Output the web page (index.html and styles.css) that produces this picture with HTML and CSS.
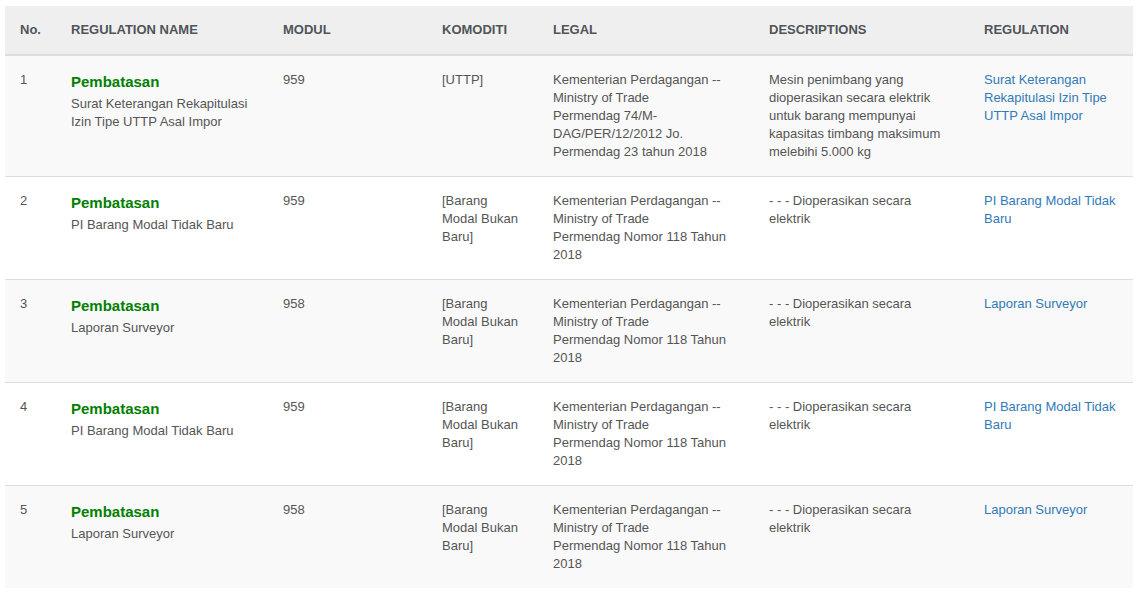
FILE: index.html
```html
<!DOCTYPE html>
<html>
<head>
<meta charset="utf-8">
<link rel="stylesheet" href="styles.css">
</head>
<body>
<div class="wrap">
<table class="reg-table">
<colgroup>
<col class="c-no"><col class="c-name"><col class="c-modul"><col class="c-kom"><col class="c-legal"><col class="c-desc"><col class="c-reg">
</colgroup>
<thead>
<tr><th>No.</th><th>REGULATION NAME</th><th>MODUL</th><th>KOMODITI</th><th>LEGAL</th><th>DESCRIPTIONS</th><th>REGULATION</th></tr>
</thead>
<tbody>
<tr>
<td>1</td>
<td><div class="type">Pembatasan</div><div>Surat Keterangan Rekapitulasi Izin Tipe UTTP Asal Impor</div></td>
<td>959</td>
<td>[UTTP]</td>
<td>Kementerian Perdagangan -- Ministry of Trade<br>Permendag 74/M-DAG/PER/12/2012 Jo. Permendag 23 tahun 2018</td>
<td>Mesin penimbang yang dioperasikan secara elektrik untuk barang mempunyai kapasitas timbang maksimum melebihi 5.000 kg</td>
<td><a href="#">Surat Keterangan Rekapitulasi Izin Tipe UTTP Asal Impor</a></td>
</tr>
<tr>
<td>2</td>
<td><div class="type">Pembatasan</div><div>PI Barang Modal Tidak Baru</div></td>
<td>959</td>
<td>[Barang Modal Bukan Baru]</td>
<td>Kementerian Perdagangan -- Ministry of Trade<br>Permendag Nomor 118 Tahun 2018</td>
<td>- - - Dioperasikan secara elektrik</td>
<td><a href="#">PI Barang Modal Tidak Baru</a></td>
</tr>
<tr>
<td>3</td>
<td><div class="type">Pembatasan</div><div>Laporan Surveyor</div></td>
<td>958</td>
<td>[Barang Modal Bukan Baru]</td>
<td>Kementerian Perdagangan -- Ministry of Trade<br>Permendag Nomor 118 Tahun 2018</td>
<td>- - - Dioperasikan secara elektrik</td>
<td><a href="#">Laporan Surveyor</a></td>
</tr>
<tr>
<td>4</td>
<td><div class="type">Pembatasan</div><div>PI Barang Modal Tidak Baru</div></td>
<td>959</td>
<td>[Barang Modal Bukan Baru]</td>
<td>Kementerian Perdagangan -- Ministry of Trade<br>Permendag Nomor 118 Tahun 2018</td>
<td>- - - Dioperasikan secara elektrik</td>
<td><a href="#">PI Barang Modal Tidak Baru</a></td>
</tr>
<tr>
<td>5</td>
<td><div class="type">Pembatasan</div><div>Laporan Surveyor</div></td>
<td>958</td>
<td>[Barang Modal Bukan Baru]</td>
<td>Kementerian Perdagangan -- Ministry of Trade<br>Permendag Nomor 118 Tahun 2018</td>
<td>- - - Dioperasikan secara elektrik</td>
<td><a href="#">Laporan Surveyor</a></td>
</tr>
</tbody>
</table>
</div>
</body>
</html>
```
FILE: styles.css
```css
html, body {
  margin: 0;
  padding: 0;
  background: #fff;
}
body {
  font-family: "Liberation Sans", Arial, sans-serif;
  font-size: 13px;
  line-height: 18px;
  color: #555;
}
.wrap {
  padding: 6px 5px;
}
.reg-table {
  width: 1128px;
  border-collapse: collapse;
  table-layout: fixed;
}
.c-no { width: 51px; }
.c-name { width: 212px; }
.c-modul { width: 159px; }
.c-kom { width: 111px; }
.c-legal { width: 216px; }
.c-desc { width: 215px; }
.c-reg { width: 164px; }
.reg-table th {
  background: #efefef;
  text-align: left;
  font-weight: bold;
  color: #4f5459;
  padding: 15px 15px;
  border-bottom: 2px solid #ddd;
  vertical-align: bottom;
}
.reg-table td {
  padding: 15px 15px;
  vertical-align: top;
  border-top: 1px solid #ddd;
}
.reg-table tbody tr:nth-child(odd) td {
  background: #f9f9f9;
}
.reg-table tbody tr:nth-child(even) td {
  background: #fff;
}
.type {
  color: #008000;
  font-weight: bold;
  font-size: 15px;
  line-height: 20px;
  padding-top: 1px;
  margin-bottom: 3px;
}
.reg-table a {
  color: #337ab7;
  text-decoration: none;
}
```
